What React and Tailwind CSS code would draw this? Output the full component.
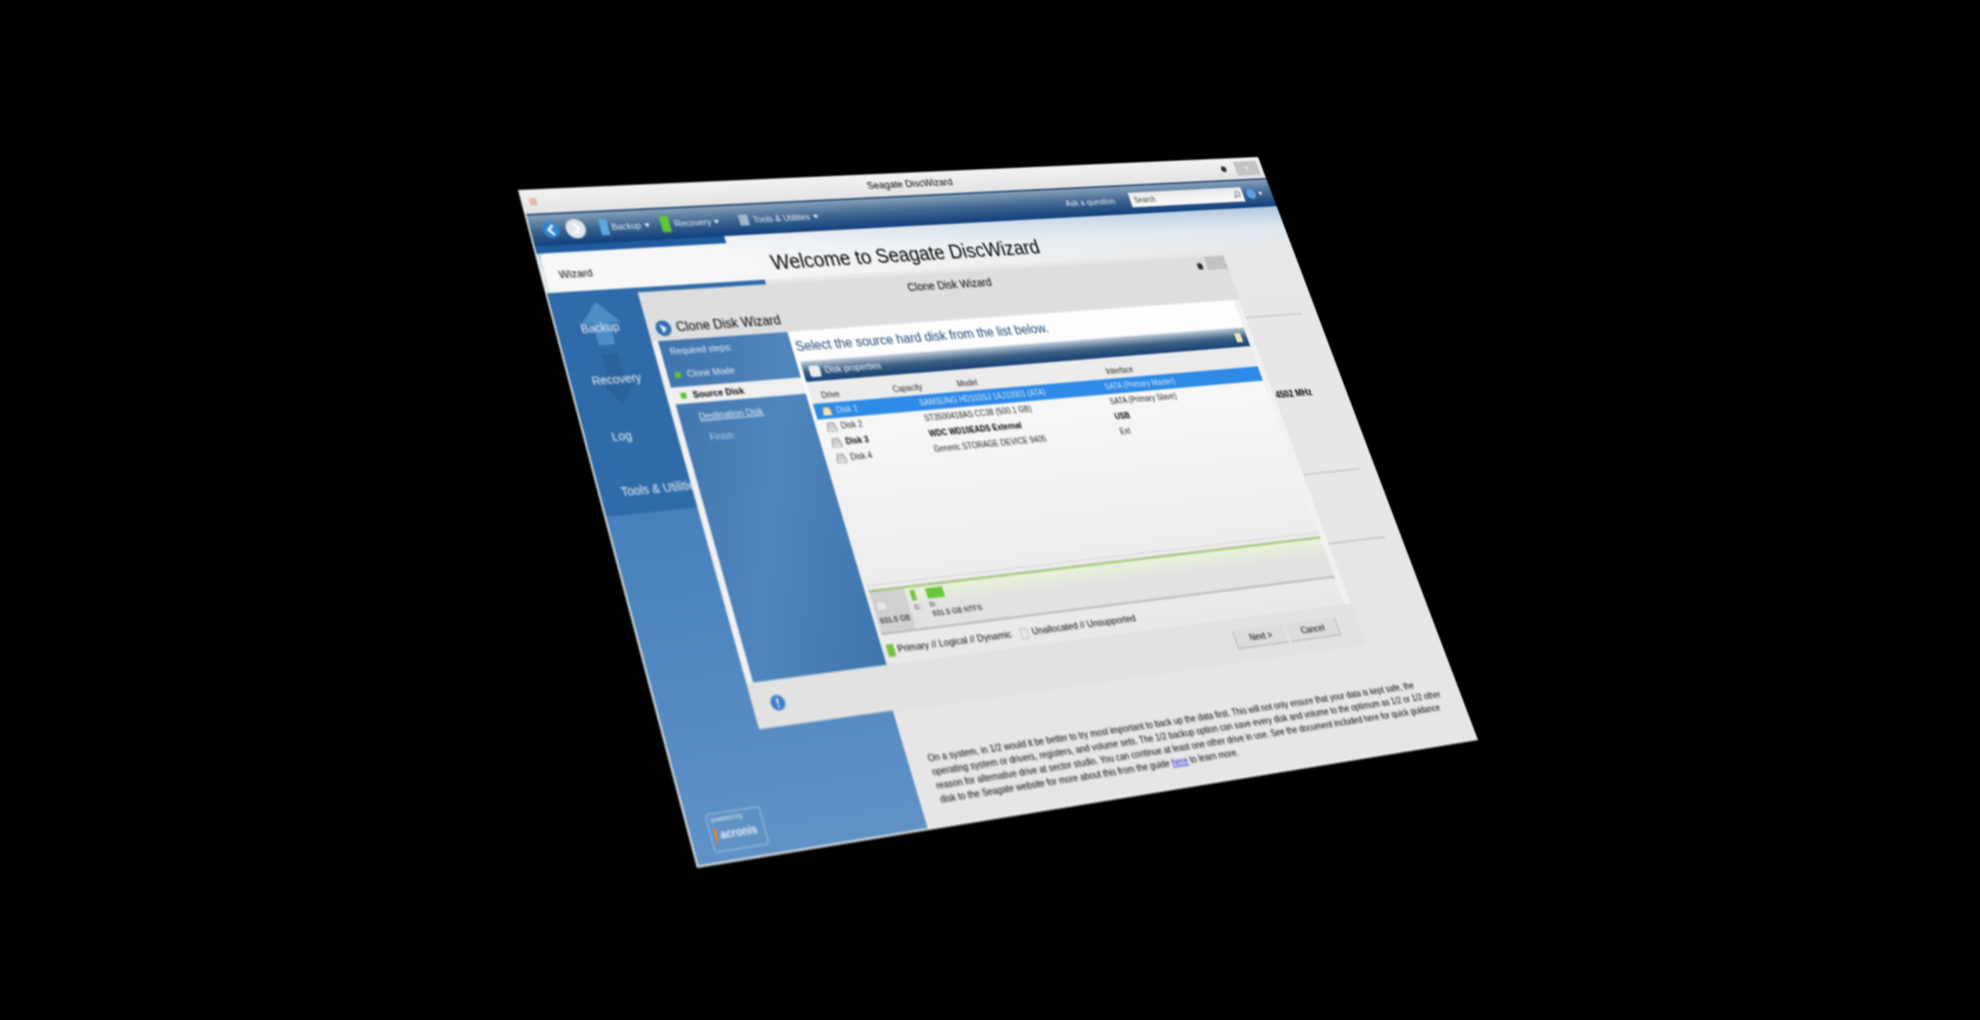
const W = 1024;
const H = 768;

function warp(p0, p1, p2, p3) {
  const dx1 = p1[0] - p2[0], dy1 = p1[1] - p2[1];
  const dx2 = p3[0] - p2[0], dy2 = p3[1] - p2[1];
  const sx = p0[0] - p1[0] + p2[0] - p3[0], sy = p0[1] - p1[1] + p2[1] - p3[1];
  const den = dx1 * dy2 - dy1 * dx2;
  const g = (sx * dy2 - sy * dx2) / den;
  const h = (dx1 * sy - dy1 * sx) / den;
  const a = p1[0] - p0[0] + g * p1[0], b = p3[0] - p0[0] + h * p3[0];
  const d = p1[1] - p0[1] + g * p1[1], e = p3[1] - p0[1] + h * p3[1];
  return `matrix3d(${a / W},${d / W},0,${g / W},${b / H},${e / H},0,${h / H},0,0,1,0,${p0[0]},${p0[1]},0,1)`;
}

const matrix = warp([518, 190], [1258, 157], [1478, 740], [697, 868]);

function Caret() {
  return <svg width="7" height="5" viewBox="0 0 7 5" className="ml-1"><path d="M0 0h7L3.5 5z" fill="#dfe8f2" /></svg>;
}

function DriveIcon({ tone = "#bfbfbf" }) {
  return (
    <svg width="14" height="14" viewBox="0 0 14 14" className="shrink-0">
      <path d="M3 2h8l2 8v2H1v-2z" fill={tone} stroke="#777" strokeWidth="0.8" />
      <rect x="2" y="9.5" width="10" height="2" fill="#efefef" />
    </svg>
  );
}

function TitleBar() {
  return (
    <div className="h-[30px] shrink-0 flex items-center bg-linear-to-b from-[#f2f2f2] to-[#e4e4e4]">
      <div className="ml-[8px] w-[9px] h-[9px] bg-[#e2b8a8]" />
      <div className="flex-1 text-center text-[13px] text-black pl-[28px]">Seagate DiscWizard</div>
      <div className="w-[8px] h-[8px] rounded-full bg-[#333] mr-[14px]" />
      <div className="w-[36px] h-[20px] mr-[6px] bg-[#c4c4c4] flex items-center justify-center text-white text-[12px]">×</div>
    </div>
  );
}

function Toolbar() {
  return (
    <div className="h-[40px] shrink-0 flex items-center border-t-2 border-[#1a3f6c] bg-linear-to-b from-[#86a0ba] via-[#3f6690] to-[#0f3f7c] text-[11px] text-[#e7eef6]">
      <svg width="22" height="22" viewBox="0 0 22 22" className="ml-[14px]">
        <circle cx="11" cy="11" r="10" fill="#2f86d0" />
        <path d="M14 5l-6 6 6 6" stroke="#fff" strokeWidth="3" fill="none" />
      </svg>
      <svg width="26" height="26" viewBox="0 0 26 26" className="ml-[6px]">
        <circle cx="13" cy="13" r="12" fill="#dfe6ec" />
        <path d="M11 7l6 6-6 6" stroke="#fff" strokeWidth="3" fill="none" />
      </svg>
      <div className="ml-[17px] flex items-center w-[76px]">
        <div className="w-[10px] h-[20px] bg-[#5aa7e0] mr-[4px]" />
        Backup<Caret />
      </div>
      <div className="flex items-center w-[100px]">
        <div className="w-[11px] h-[20px] bg-[#5fc832] mr-[6px]" />
        Recovery<Caret />
      </div>
      <div className="flex items-center w-[140px]">
        <div className="w-[12px] h-[14px] bg-[#9fb6cc] mr-[6px]" />
        Tools &amp; Utilities<Caret />
      </div>
      <div className="ml-auto text-[11px]">Ask a question</div>
      <div className="ml-[23px] w-[172px] h-[20px] bg-linear-to-b from-[#e8e8e8] to-[#fafafa] flex items-center text-[#444] text-[10px] pl-[6px]">
        Search
        <svg width="12" height="12" viewBox="0 0 12 12" className="ml-auto mr-[3px]">
          <circle cx="7" cy="5" r="3.4" fill="none" stroke="#778" strokeWidth="1.3" />
          <path d="M4.5 7.5L1 11" stroke="#778" strokeWidth="1.6" />
        </svg>
      </div>
      <div className="ml-[6px] w-[14px] h-[14px] rounded-full bg-[#5a9fe0]" />
      <Caret />
      <div className="w-[14px]" />
    </div>
  );
}

function Banner() {
  return (
    <div className="h-[57px] shrink-0 flex bg-linear-to-b from-[#afc8e0] via-[#dfe8f0] to-[#e8e8e8]">
      <div className="w-[236px] flex flex-col">
        <div className="h-[9px] bg-[#1f5b9e]" />
        <div className="flex-1 bg-[#f7f7f7] rounded-tl-[6px] flex items-center pt-[6px] pl-[16px] text-[13px] text-black ml-[4px]">Wizard</div>
      </div>
      <div className="flex-1 bg-linear-to-r from-[#f8f8f8]/90 to-transparent pt-[22px] pl-[50px] text-[25px] leading-[28px] text-black whitespace-nowrap">
        Welcome to Seagate DiscWizard
      </div>
    </div>
  );
}

const navItems = [
  { label: "Backup", dir: "up", cls: "text-center pr-[6px]" },
  { label: "Recovery", dir: "down", cls: "text-center" },
  { label: "Log", cls: "text-center pr-[24px] pt-[8px]" },
  { label: "Tools & Utilities", cls: "pl-[25px] pt-[10px]" },
];

function NavItem({ item }) {
  return (
    <div className="h-[62px] w-[110px] grid items-center whitespace-nowrap">
      {item.dir && (
        <svg width="60" height="62" viewBox="0 0 60 62" className="[grid-area:1/1] justify-self-center">
          {item.dir === "up" ? (
            <path d="M30 0L54 26H40V52H20V26H6z" fill="#5a9ad2" opacity="0.75" />
          ) : (
            <path d="M20 0H40V34H52L30 60 8 34H20z" fill="#2c5f97" opacity="0.75" />
          )}
        </svg>
      )}
      <div className={`[grid-area:1/1] text-[14px] text-[#e6eef6] ${item.cls}`}>{item.label}</div>
    </div>
  );
}

function Nav() {
  return (
    <div className="w-[271px] shrink-0 flex flex-col bg-linear-to-b from-[#3f7bb6] via-[#4a83bd] to-[#6092c6]">
      <div className="h-[262px] pt-[14px] shrink-0 flex flex-col bg-[#2f6ba8]">
        {navItems.map((item) => <NavItem key={item.label} item={item} />)}
      </div>
      <div className="mt-auto mb-[10px] ml-[22px] w-[63px] h-[40px] border border-[#a8c4e0] rounded-[3px] px-[4px] text-[#eaf1f8]">
        <div className="text-[7px] leading-[12px]">powered by</div>
        <div className="flex items-center gap-[3px] text-[12px] font-bold leading-[20px]">
          <span className="w-[3px] h-[16px] bg-[#d8843c]" />
          acronis
        </div>
      </div>
    </div>
  );
}

function Steps() {
  return (
    <div className="w-[163px] shrink-0 bg-linear-to-br from-[#3f74ab] via-[#4f86bd] to-[#3f76ae] text-[11px] text-[#e8f0f8] pt-[4px]">
      <div className="h-[18px] pl-[11px] flex items-center">Required steps:</div>
      <div className="h-[28px] mt-[5px] pl-[9px] flex items-center gap-[8px]">
        <span className="w-[7px] h-[7px] bg-[#62c23a]" />Clone Mode
      </div>
      <div className="h-[20px] mt-[1px] mr-[-5px] pl-[9px] flex items-center gap-[8px] bg-[#f0f0f0] font-bold text-black">
        <span className="w-[7px] h-[7px] bg-[#62c23a]" />Source Disk
      </div>
      <div className="h-[25px] mt-[4px] pl-[24px] flex items-center underline">Destination Disk</div>
      <div className="h-[25px] pl-[30px] flex items-center text-[#b8cfe6]">Finish</div>
    </div>
  );
}

const rows = [
  { d: "Disk 1", m: "SAMSUNG HD103SJ 1AJ10001 (ATA)", i: "SATA (Primary Master)", sel: true },
  { d: "Disk 2", m: "ST3500418AS CC38 (500.1 GB)", i: "SATA (Primary Slave)" },
  { d: "Disk 3", m: "WDC WD10EADS External", i: "USB", dark: true },
  { d: "Disk 4", m: "Generic STORAGE DEVICE 9405", i: "Ext" },
];

function DiskList() {
  return (
    <div className="flex-1 min-h-0 flex flex-col">
      <div className="h-[25px] shrink-0 flex items-center bg-linear-to-b from-[#c3cfdb] via-[#3d6285] to-[#123f73] text-white text-[11px] pl-[8px] pr-[8px]">
        <div className="w-[14px] h-[14px] bg-[#e8edf2] rounded-[3px] mr-[6px]" />
        Disk properties
        <div className="ml-auto w-[9px] h-[12px] bg-[#efe5b8]" />
      </div>
      <div className="h-[27px] shrink-0 pt-[10px] grid grid-cols-[93px_86px_207px_1fr] bg-[#ececec] text-[10px] text-[#222] pl-[14px]">
        <div>Drive</div>
        <div>Capacity</div>
        <div>Model</div>
        <div>Interface</div>
      </div>
      {rows.map((r) => (
        <div
          key={r.d}
          className={`h-[19px] shrink-0 grid grid-cols-[128px_255px_1fr] items-center text-[10px] pl-[8px] ${
            r.sel ? "bg-[#2d8ae6] text-[#d6e9fb]" : r.dark ? "text-black font-bold" : "text-[#222]"
          }`}
        >
          <div className="flex items-center gap-[5px]">
            <DriveIcon tone={r.sel ? "#f1e2a6" : "#cfcfcf"} />
            {r.d}
          </div>
          <div className="whitespace-nowrap">{r.m}</div>
          <div className="whitespace-nowrap">{r.i}</div>
        </div>
      ))}
    </div>
  );
}

function DiskMap() {
  return (
    <div className="shrink-0">
      <div className="h-[6px] border-y border-dashed border-[#bbb]" />
      <div className="h-[2px] bg-[#9dc46a]" />
      <div className="h-[49px] flex bg-linear-to-b from-[#e9f2d9] via-[#e2e2e2] to-[#e2e2e2] border-b-2 border-[#b4b4b4]">
        <div className="w-[44px] bg-[#d0d0d0] flex flex-col justify-end text-[9px] text-black pl-[3px] pb-[7px] whitespace-nowrap">
          <div className="w-[14px] h-[12px] bg-[#e3e3e3] border border-[#bbb] mb-[4px]" />
          931.5 GB
        </div>
        <div className="w-[26px] pl-[6px] pt-[3px]">
          <div className="w-[6px] h-[12px] bg-[#72c43d]" />
          <div className="text-[8px] text-black mt-[2px]">C:</div>
        </div>
        <div className="pt-[3px] flex-1">
          <div className="w-[22px] h-[12px] bg-[#68c83c]" />
          <div className="text-[8px] leading-[10px] text-black mt-[2px]">D:</div>
          <div className="text-[9px] leading-[10px] text-black">931.5 GB NTFS</div>
        </div>
      </div>
    </div>
  );
}

function Legend() {
  return (
    <div className="h-[33px] shrink-0 flex items-center pt-[3px] text-[11.5px] text-black">
      <div className="w-[9px] h-[14px] bg-[#72c43d] ml-[1px] mr-[4px]" />
      <span className="whitespace-nowrap">Primary // Logical // Dynamic</span>
      <div className="w-[10px] h-[13px] bg-[#e6e6e6] border border-[#bdbdbd] ml-[12px] mr-[5px]" />
      <span className="whitespace-nowrap">Unallocated // Unsupported</span>
    </div>
  );
}

function Dialog() {
  return (
    <div className="absolute left-[109px] top-[133px] w-[804px] h-[504px] flex flex-col bg-[#dcdcdc] shadow-[0_0_1px_#bbb]">
      <div className="h-[60px] shrink-0 bg-[#dedede] flex flex-col">
        <div className="h-[30px] flex items-center relative">
          <div className="flex-1 text-center text-[14px] text-black">Clone Disk Wizard</div>
          <div className="absolute right-[36px] top-[8px] w-[8px] h-[9px] rounded-full bg-[#333]" />
          <div className="absolute right-0 top-0 w-[30px] h-[18px] bg-[#c2c2c2]" />
        </div>
        <div className="h-[30px] flex items-center pl-[9px]">
          <svg width="20" height="20" viewBox="0 0 20 20" className="mr-[6px]">
            <circle cx="10" cy="10" r="9.5" fill="#2f6fae" />
            <path d="M6 5l8 5-5 6z" fill="#e6f0fa" />
          </svg>
          <span className="text-[16px] text-black whitespace-nowrap">Clone Disk Wizard</span>
        </div>
      </div>
      <div className="h-[394px] shrink-0 flex pl-[8px] pr-[9px] bg-[#f1f1f1]">
        <Steps />
        <div className="flex-1 min-w-0 flex flex-col pl-[5px] bg-linear-to-b from-[#ffffff] via-[#f2f2f2] to-[#e9e9e9]">
          <div className="h-[37px] shrink-0 flex items-center text-[16.5px] text-[#1d4674] whitespace-nowrap">
            Select the source hard disk from the list below.
          </div>
          <DiskList />
          <DiskMap />
          <Legend />
        </div>
      </div>
      <div className="flex-1 flex items-center pl-[21px] pr-[30px] bg-[#e2e2e2]">
        <svg width="18" height="18" viewBox="0 0 18 18">
          <circle cx="9" cy="9" r="8.5" fill="#3a7dc8" />
          <path d="M9 4v6M9 12v2" stroke="#e8f2fc" strokeWidth="2.4" />
        </svg>
        <div className="ml-auto w-[72px] h-[22px] mr-[4px] bg-[#dcdcdc] border-b border-l border-[#a8a8a8] flex items-center justify-center text-[11px] text-black">Next &gt;</div>
        <div className="w-[72px] h-[22px] bg-[#dcdcdc] border-b border-r border-[#a8a8a8] flex items-center justify-center text-[11px] text-black">Cancel</div>
      </div>
    </div>
  );
}

function Main() {
  return (
    <div className="flex-1 min-w-0 flex flex-col bg-linear-to-b from-[#e8e8e8] to-[#e6e6e6]">
      <div className="self-end mr-[24px] w-[85px] shrink-0 text-[12px] text-black">
        <div className="h-[91px] border-b border-[#aaa]" />
        <div className="h-[207px] border-b border-[#aaa] pt-[94px] pl-[2px] whitespace-nowrap font-semibold">4502 MHz</div>
        <div className="h-[88px] border-b border-[#aaa]" />
      </div>
      <div className="pt-[173px] pl-[25px] text-[10.8px] leading-[15px] text-black whitespace-nowrap">
        <div>On a system, in 1/2 would it be better to try most important to back up the data first. This will not only ensure that your data is kept safe, the</div>
        <div>operating system or drivers, registers, and volume sets. The 1/2 backup option can save every disk and volume to the optimum as 1/2 or 1/2 other</div>
        <div>reason for alternative drive at sector studio. You can continue at least one other drive in use. See the document included here for quick guidance</div>
        <div>disk to the Seagate website for more about this from the guide <span className="text-[#2222cc] underline">here</span> to learn more.</div>
      </div>
    </div>
  );
}

export default function App() {
  return (
    <div className="w-full h-screen bg-black overflow-hidden" style={{ fontFamily: '"Liberation Sans", Arial, sans-serif' }}>
      <div
        className="w-[1024px] h-[768px] origin-top-left relative flex flex-col bg-[#e8e8e8] border-l-2 border-b-2 border-[#f2f4ee] blur-[1.1px]"
        style={{ transform: matrix }}
      >
        <TitleBar />
        <Toolbar />
        <Banner />
        <div className="flex-1 min-h-0 flex">
          <Nav />
          <Main />
        </div>
        <Dialog />
      </div>
    </div>
  );
}
